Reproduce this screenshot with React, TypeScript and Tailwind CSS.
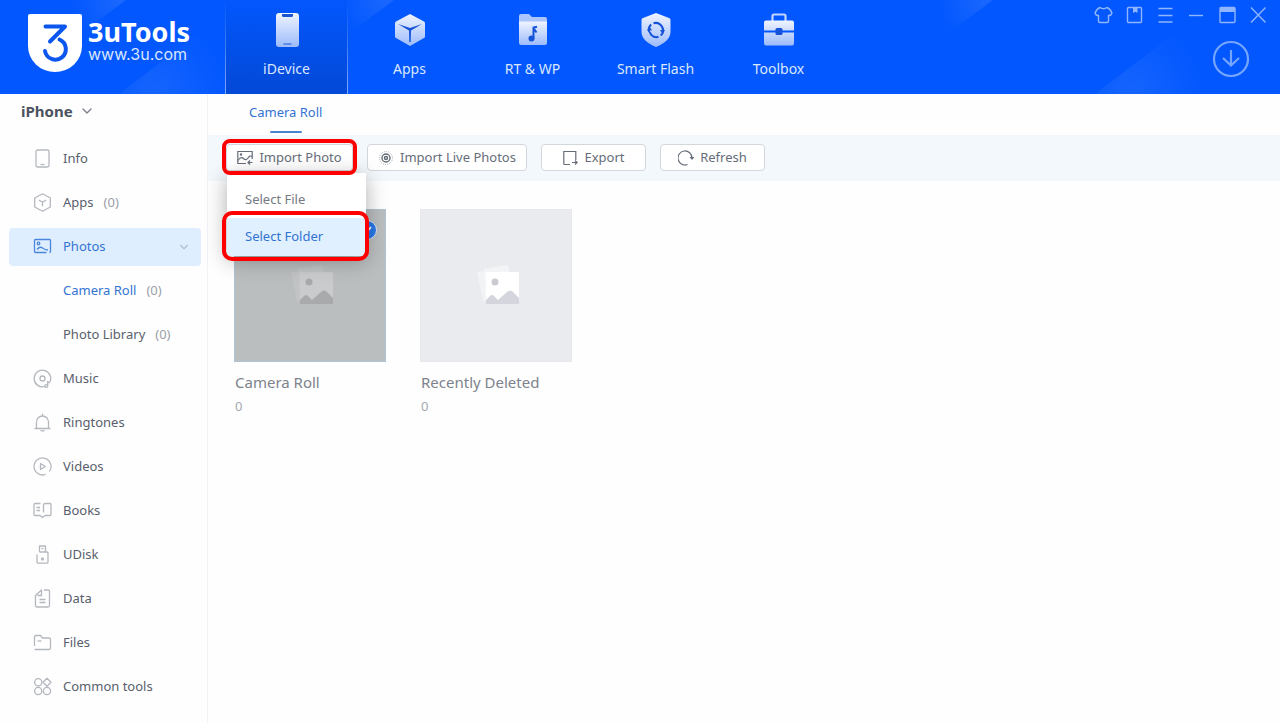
import React, { useState } from "react";
import { ChevronDown } from "lucide-react";

type IconName =
  | "info"
  | "apps"
  | "photos"
  | "music"
  | "ringtones"
  | "videos"
  | "books"
  | "udisk"
  | "data"
  | "files"
  | "tools";

const sideIcons: Record<IconName, React.ReactNode> = {
  info: (
    <>
      <rect x="3" y="1" width="13" height="17" rx="1.5" />
      <path d="M7.5 15.5h4" />
    </>
  ),
  apps: (
    <>
      <path d="M9.5 .8l7.8 4.2v9l-7.8 4.3-7.8-4.3V5z" />
      <path d="M5.8 7l3.7 2.2L13.2 7M9.5 9.2v4" />
    </>
  ),
  photos: (
    <>
      <path d="M1.5 13V3.5q0-1 1-1h14q1 0 1 1v11q0 1-1 1M1.5 12.5v2q0 1 1 1h11" />
      <circle cx="5.5" cy="6.5" r="1.3" />
      <path d="M4 12.5q3-3.5 5.5-1.500t5.500 2" />
    </>
  ),
  music: (
    <>
      <path d="M12 17.400a8.300 8.300 0 1 1 5-4.500" />
      <circle cx="9.5" cy="9.5" r="2.5" />
      <circle cx="13.3" cy="17" r="1.4" />
      <path d="M14.7 17v-4.500l2 1.500" />
    </>
  ),
  ringtones: (
    <path d="M1.5 15.500h16M3.500 15.500V9a6 6 0 0 1 12 0v6.500M9.500 3V.8M7.500 17.200q2 1.500 4 0" />
  ),
  videos: (
    <>
      <path d="M12.500 17.400a8.500 8.500 0 1 1 4-3.100" />
      <path d="M7.500 6.500l4.800 3-4.800 3z" />
    </>
  ),
  books: (
    <>
      <path d="M7.500 2.500H2q-1 0-1 1v10q0 1 1 1h5l2.500 2 2.500-2h5q1 0 1-1v-10q0-1-1-1h-4.500q-2 0-2 1.500v7.500" />
      <path d="M3.500 6.500h3.500M3.500 9.500h3.500" />
    </>
  ),
  udisk: (
    <>
      <path d="M6.500 7V1h6v6M4 9.500V17q0 1.200 1.200 1.200h8.600q1.200 0 1.200-1.200V8q0-1-1-1H6.500" />
      <path d="M8.500 3.500h2" />
      <circle cx="9.5" cy="14" r="1" />
    </>
  ),
  data: (
    <>
      <path d="M11 1h4q1.500 0 1.500 1.500v14q0 1.500-1.500 1.500H4q-1.500 0-1.500-1.500V6.500L8.500 1v5.500h-4" />
      <path d="M6.500 10.500h6M6.500 13.500h6" />
    </>
  ),
  files: (
    <>
      <path d="M1.500 13V4q0-1.500 1.500-1.500h4.500l2 2.500h6.500q1.500 0 1.500 1.500V15q0 1.500-1.500 1.500H1.500" />
      <path d="M4.500 8h4" />
    </>
  ),
  tools: (
    <>
      <circle cx="5.2" cy="5.2" r="3.6" />
      <path d="M14 1.200l4 4-4 4-4-4z" />
      <circle cx="5.2" cy="14" r="3.6" />
      <circle cx="14" cy="14" r="3.6" />
    </>
  ),
};

const SideIcon: React.FC<{ name: IconName }> = ({ name }) => (
  <svg
    viewBox="0 0 19 19"
    className="h-[19px] w-[19px] shrink-0"
    fill="none"
    stroke="currentColor"
    strokeWidth="1.3"
    strokeLinejoin="round"
    aria-hidden="true"
  >
    {sideIcons[name]}
  </svg>
);

const navItems = [
  {
    label: "iDevice",
    icon: (
      <>
        <rect x="7" y="1" width="23" height="34" rx="3" fill="url(#navFill)" />
        <path d="M13 2h11v1.500q0 1.500-1.500 1.500h-8Q13 5 13 3.500z" fill="#1c55d0" />
        <path d="M14.500 32h8" stroke="#1c55d0" />
      </>
    ),
  },
  {
    label: "Apps",
    icon: (
      <>
        <path
          d="M18 2l14 7.500q1 .5 1 1.500v13.500q0 1-1 1.500l-14 8-14-8q-1-.5-1-1.500V11q0-1 1-1.500z"
          fill="url(#navFill)"
        />
        <path d="M6 12l12 4 12-4-11 6.500L18.700 30h-1.400L17 18.500z" fill="#1552d8" />
      </>
    ),
  },
  {
    label: "RT & WP",
    icon: (
      <>
        <path d="M4 4q0-2 2-2h8l3 3h13q2 0 2 2v4H4z" fill="#aac4fc" />
        <path d="M4 9.500h28V31q0 2-2 2H6q-2 0-2-2z" fill="url(#navFill)" />
        <circle cx="16.5" cy="26.5" r="3" fill="#1552d8" />
        <path d="M18.500 26.500V15.500l3.500-.8M18.500 16l3 4.500" stroke="#1552d8" strokeWidth="2" fill="none" />
      </>
    ),
  },
  {
    label: "Smart Flash",
    icon: (
      <>
        <path
          d="M18 1l13 5q1.500.5 1.500 2v12q0 9-14.500 15Q3.500 29 3.500 20V8q0-1.500 1.500-2z"
          fill="url(#navFill)"
        />
        <path
          d="M11.200 20a7 7 0 0 1 2-7.500M15.500 11.300a7 7 0 0 1 9.300 6.200M24.800 16a7 7 0 0 1-2 7.500M20.500 24.800a7 7 0 0 1-8.800-4.800"
          stroke="#1552d8"
          strokeWidth="2"
          fill="none"
        />
        <path d="M9 18.500h5l-2.500-4zM22 18h5l-2.500 4z" fill="#1552d8" />
      </>
    ),
  },
  {
    label: "Toolbox",
    icon: (
      <>
        <path d="M11.500 9V4q0-1.500 1.500-1.500h10q1.500 0 1.500 1.500v5" stroke="#c0d3ff" strokeWidth="2.2" fill="none" />
        <path d="M3 10.500q0-2 2-2h26q2 0 2 2v8H3zM3 20.500h30V31q0 2.500-2 2.500H5q-2 0-2-2.500z" fill="url(#navFill)" />
        <rect x="14.5" y="16" width="7" height="7" rx="1.5" fill="#1552d8" />
      </>
    ),
  },
];

const Logo: React.FC = () => (
  <a href="#" className="flex w-[225px] shrink-0 items-start pt-3.5 pl-7 text-white">
    <svg viewBox="0 0 54 58" className="h-[58px] w-[54px]" aria-hidden="true">
      <path d="M2 0h50q2 0 2 2v30a27 26 0 0 1-54 0V2q0-2 2-2z" fill="#fff" />
      <path
        d="M17.500 12.500h19.500L22 27.500M31.500 25.500a10.500 10.500 0 1 1-14.500 11.500"
        stroke="#0b56ee"
        strokeWidth="4"
        strokeLinecap="round"
        strokeLinejoin="round"
        fill="none"
      />
    </svg>
    <span className="ml-1.5 flex flex-col pt-1">
      <span className="text-[27px] leading-7 font-bold">3uTools</span>
      <span className="font-['Inter'] text-base leading-4 text-[#d9e6ff]">www.3u.com</span>
    </span>
  </a>
);

const windowButtons = [
  {
    label: "Skin",
    icon: (
      <path d="M6 1.500q3.500 2.500 7 0 3 1 5 5.500-1 3-3.500 2.500V15q0 1.500-1.500 1.500H6q-1.500 0-1.500-1.500V9.500Q2 10 1 7q2-4.500 5-5.500z" />
    ),
  },
  {
    label: "Notes",
    icon: (
      <>
        <rect x="2.5" y="1.5" width="14" height="15" rx="1" />
        <path d="M8 2h4.500v5l-2.200-1.200L8 7z" fill="currentColor" stroke="none" />
      </>
    ),
  },
  { label: "Menu", icon: <path d="M2.500 2.500h14M2.500 9.500h14M2.500 16h14" /> },
  { label: "Minimize", icon: <path d="M2 9.500h14" /> },
  {
    label: "Maximize",
    icon: (
      <>
        <rect x="2" y="1.5" width="15" height="15" rx="1" />
        <path d="M2 2h15v4H2z" fill="currentColor" stroke="none" />
      </>
    ),
  },
  { label: "Close", icon: <path d="M2 1.500l14.500 15M16.500 1.500L2 16.500" /> },
];

const WindowControls: React.FC = () => (
  <div className="mr-3 ml-auto flex flex-col items-end pt-1.5 text-[#8fb5ff]">
    <div className="flex gap-3">
      {windowButtons.map((button) => (
        <button key={button.label} aria-label={button.label}>
          <svg
            viewBox="0 0 19 19"
            className="h-[19px] w-[19px]"
            fill="none"
            stroke="currentColor"
            strokeWidth="1.4"
          >
            {button.icon}
          </svg>
        </button>
      ))}
    </div>
    <button aria-label="Downloads" className="mt-[15px] mr-[18px]">
      <svg viewBox="0 0 38 38" className="h-[38px] w-[38px]" fill="none" stroke="#76a5ff" strokeWidth="2.2">
        <circle cx="19" cy="19" r="17" />
        <path d="M19 10v15.500M11 18l8 7.500 8-7.500" />
      </svg>
    </button>
  </div>
);

const Header: React.FC = () => (
  <header className="relative h-[94px] overflow-hidden bg-[#0257fe]">
    {/* Diagonal light streaks */}
    <svg className="absolute inset-0 h-full w-full" viewBox="0 0 1280 94" preserveAspectRatio="none" aria-hidden="true">
      <defs>
        <linearGradient id="navFill" x1="0" y1="0" x2="0" y2="1">
          <stop offset="0" stopColor="#eff4ff" />
          <stop offset="1" stopColor="#9dbbfb" />
        </linearGradient>
        <radialGradient id="glowLow" gradientUnits="userSpaceOnUse" cx="35" cy="94" r="75">
          <stop offset="0" stopColor="#fff" stopOpacity="0.08" />
          <stop offset="1" stopColor="#fff" stopOpacity="0" />
        </radialGradient>
        <radialGradient id="glowTop" gradientUnits="userSpaceOnUse" cx="0" cy="0" r="48">
          <stop offset="0" stopColor="#fff" stopOpacity="0.1" />
          <stop offset="1" stopColor="#fff" stopOpacity="0" />
        </radialGradient>
      </defs>
      <path d="M0 94L105 14V94z" fill="url(#glowLow)" transform="translate(119 0)" />
      <path d="M0 94L105 14V94z" fill="url(#glowLow)" transform="translate(1095 0)" />
      <path d="M-60 0H6L-40 34z" fill="url(#glowTop)" transform="translate(120 0)" />
      <path d="M-60 0H6L-40 34z" fill="url(#glowTop)" transform="translate(388 0)" />
      <path d="M-60 0H6L-40 34z" fill="url(#glowTop)" transform="translate(987 0)" />
    </svg>
    <div className="relative flex h-full">
      <Logo />
      <nav className="flex">
        {navItems.map((item, index) => (
          <a
            key={item.label}
            href="#"
            className={`relative flex w-[123px] flex-col items-center pt-3 text-sm text-[#dbe7ff] ${
              index === 0 ? "bg-linear-to-b from-[#0257fe] to-[#0349d6]" : ""
            }`}
          >
            {index === 0 && (
              <>
                <span className="absolute inset-y-0 left-0 w-px bg-linear-to-b from-transparent to-[#7fabff]" />
                <span className="absolute inset-y-0 right-0 w-px bg-linear-to-b from-transparent to-[#7fabff]" />
              </>
            )}
            <svg viewBox="0 0 36 36" className="h-9 w-9" aria-hidden="true">
              {item.icon}
            </svg>
            <span className="mt-[11px] leading-5">{item.label}</span>
          </a>
        ))}
      </nav>
      <WindowControls />
    </div>
  </header>
);

const sideItems: {
  label: string;
  icon?: IconName;
  count?: number;
  active?: boolean;
  current?: boolean;
}[] = [
  { label: "Info", icon: "info" },
  { label: "Apps", icon: "apps", count: 0 },
  { label: "Photos", icon: "photos", active: true },
  { label: "Camera Roll", count: 0, current: true },
  { label: "Photo Library", count: 0 },
  { label: "Music", icon: "music" },
  { label: "Ringtones", icon: "ringtones" },
  { label: "Videos", icon: "videos" },
  { label: "Books", icon: "books" },
  { label: "UDisk", icon: "udisk" },
  { label: "Data", icon: "data" },
  { label: "Files", icon: "files" },
  { label: "Common tools", icon: "tools" },
];

const Sidebar: React.FC = () => (
  <aside className="w-[208px] shrink-0 border-r border-[#f0f2f5] pr-1.5 pl-[9px]">
    <button className="flex h-[34px] items-center gap-1.5 pl-3 text-[15px] font-bold text-[#4b5260]">
      iPhone
      <ChevronDown className="h-4 w-4 text-[#7d828c]" />
    </button>
    <nav className="flex flex-col gap-1.5 pt-3">
      {sideItems.map((item) => (
        <a
          key={item.label}
          href="#"
          className={`flex h-[38px] items-center rounded-sm text-[13px] ${
            item.active
              ? "bg-[#dfeefe] text-[#3374d2]"
              : item.current
                ? "text-[#3374d2]"
                : "text-[#59606d]"
          }`}
        >
          <span
            className={`flex w-[54px] pb-0.5 pl-6 ${
              item.active ? "text-[#4a86dc]" : "text-[#b4b8be]"
            }`}
          >
            {item.icon && <SideIcon name={item.icon} />}
          </span>
          {item.label}
          {item.count !== undefined && (
            <span className="ml-2.5 text-[#9a9fa8]">({item.count})</span>
          )}
          {item.active && (
            <ChevronDown className="mr-2.5 ml-auto h-3.5 w-3.5 text-[#aebfd3]" />
          )}
        </a>
      ))}
    </nav>
  </aside>
);

const toolButton =
  "flex h-[27px] items-center justify-center gap-1.5 rounded-sm border border-[#d3d7dc] bg-white text-[13px] text-[#666d78]";

const Toolbar: React.FC = () => {
  const [isMenuOpen, setIsMenuOpen] = useState(true);

  return (
    <div className="flex h-[46px] items-start gap-3.5 bg-[#f3f8fc] pt-[9px] pl-[18px]">
      <div className="relative">
        <button
          className={`${toolButton} w-[127px]`}
          onClick={() => setIsMenuOpen(!isMenuOpen)}
        >
          <svg viewBox="0 0 16 16" className="h-4 w-4" fill="none" stroke="currentColor" strokeWidth="1.2">
            <path d="M9 13.500H.8v-12h14.400V9" />
            <circle cx="4" cy="4.5" r=".6" />
            <path d="M1 10.500q3-4.500 5.500-2t4.500-.5 4-1.500M15.500 12.500h-4.500M13 10.500l-2 2 2 2" />
          </svg>
          Import Photo
        </button>
        <span className="pointer-events-none absolute -inset-x-1 -top-[5px] -bottom-1 z-20 rounded-lg border-4 border-[#fe0000]" />

        {isMenuOpen && (
          <div className="absolute top-[29px] left-px z-10 w-[139px] bg-white pt-2 text-[13px] shadow-[0_4px_20px_rgba(0,0,0,0.32)]">
            <button className="flex h-[37px] w-full items-center pl-[18px] text-[#757a83]">
              Select File
            </button>
            <div className="relative">
              <button className="flex h-[38px] w-full items-center bg-[#e0f0ff] pl-[18px] text-[#3374d2]">
                Select Folder
              </button>
              <span className="pointer-events-none absolute -top-[7px] -right-[3px] -bottom-[5px] -left-[5px] rounded-[10px] border-4 border-[#fe0000]" />
            </div>
          </div>
        )}
      </div>

      <button className={`${toolButton} w-[160px]`}>
        <svg viewBox="0 0 16 16" className="h-4 w-4" fill="none" stroke="currentColor">
          <circle cx="8" cy="8" r="6.5" strokeWidth="1" strokeDasharray="1 1" opacity="0.5" />
          <circle cx="8" cy="8" r="4" strokeWidth="1.4" />
          <circle cx="8" cy="8" r="1.5" strokeWidth="1.5" />
        </svg>
        Import Live Photos
      </button>
      <button className={`${toolButton} w-[105px]`}>
        <svg viewBox="0 0 16 16" className="h-4 w-4" fill="none" stroke="currentColor" strokeWidth="1.2">
          <path d="M8 14.500H2.600q-.8 0-.8-.8V1.500h12V10" />
          <path d="M10 12.500h5M13 10.500l2.200 2-2.200 2" />
        </svg>
        Export
      </button>
      <button className={`${toolButton} w-[105px]`}>
        <svg viewBox="0 0 16 16" className="h-4 w-4" fill="none" stroke="currentColor" strokeWidth="1.2">
          <path d="M9.500 14.500A7 7 0 1 1 14 8" />
          <path d="M11.500 7h5L14 10z" fill="currentColor" stroke="none" />
        </svg>
        Refresh
      </button>
    </div>
  );
};

const AlbumArt: React.FC<{ selected: boolean }> = ({ selected }) => (
  <svg
    viewBox="0 0 52 42"
    className={`ml-3 h-[42px] w-[52px] ${selected ? "text-[#cacbcc]" : "text-white"}`}
    aria-hidden="true"
  >
    <path d="M1 7l9-1v30l-3 1z" fill="currentColor" opacity="0.4" />
    <path d="M8 4l24-4 2 8H10v24z" fill="currentColor" opacity="0.45" />
    <rect x="10" y="7" width="33" height="32" rx="1" fill="currentColor" />
    <circle cx="19" cy="17" r="3.5" fill={selected ? "#a9aaac" : "#cacbd0"} />
    <path
      d="M10 39v-4l4-4q2-2 4 0l4 4 9-8q3-3 6 0l6 6v6z"
      fill={selected ? "#a9aaac" : "#d5d6dd"}
    />
  </svg>
);

const albums = [
  { name: "Camera Roll", count: 0, selected: true },
  { name: "Recently Deleted", count: 0, selected: false },
];

const App: React.FC = () => {
  return (
    <div className="flex min-h-screen flex-col bg-[#fefefe] font-['Noto_Sans',sans-serif]">
      <Header />
      <div className="flex flex-1">
        <Sidebar />
        <main className="min-w-0 flex-1">
          <div className="flex h-[41px] pl-[41px]">
            <a
              href="#"
              className="relative flex items-center pb-1 text-[13px] text-[#3374d2]"
            >
              Camera Roll
              <span className="absolute bottom-0.5 left-1/2 h-0.5 w-8 -translate-x-1/2 rounded-full bg-[#4a83cf]" />
            </a>
          </div>
          <Toolbar />
          <div className="flex flex-wrap gap-[34px] px-[26px] pt-7">
            {albums.map((album) => (
              <a key={album.name} href="#" className="block w-[152px]">
                <div
                  className={`relative flex h-[153px] items-center justify-center border ${
                    album.selected
                      ? "border-[#b2c3d3] bg-[#bbbebf]"
                      : "border-[#e6e8ed] bg-[#e9ebef]"
                  }`}
                >
                  <AlbumArt selected={album.selected} />
                  {album.selected && (
                    <span className="absolute top-2.5 right-2 flex h-5 w-5 items-center justify-center rounded-full border border-[#dbe8f8] bg-[#2a79e8]">
                      <svg viewBox="0 0 12 12" className="h-3 w-3" fill="none" stroke="#fff" strokeWidth="1.8">
                        <path d="M2 6l3 3 5-6" />
                      </svg>
                    </span>
                  )}
                </div>
                <div className="mt-2 pl-px text-[15px] leading-6 text-[#7d838c]">
                  {album.name}
                </div>
                <div className="mt-0.5 pl-px text-[13px] leading-5 text-[#a5a9b0]">
                  {album.count}
                </div>
              </a>
            ))}
          </div>
        </main>
      </div>
    </div>
  );
};

export default App;
